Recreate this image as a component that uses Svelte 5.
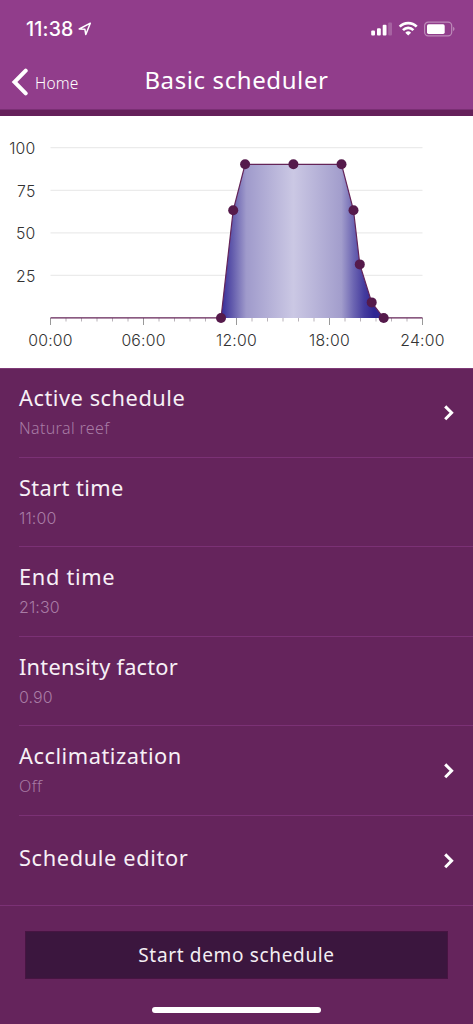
<script>
  const rows = [
    { title: 'Active schedule', value: 'Natural reef', more: true, numeric: false, tracking: 0.53 },
    { title: 'Start time', value: '11:00', more: false, numeric: true, tracking: 0.38 },
    { title: 'End time', value: '21:30', more: false, numeric: true, tracking: 0.68 },
    { title: 'Intensity factor', value: '0.90', more: false, numeric: true, tracking: 0.22 },
    { title: 'Acclimatization', value: 'Off', more: true, numeric: false, tracking: 0.53 },
    { title: 'Schedule editor', value: '', more: true, numeric: false, tracking: 0.62 }
  ];
  const points = [
    [221, 202], [233.2, 94.3], [245.1, 48.3], [293.4, 48.3], [341.5, 48.3],
    [353.5, 94.3], [359.8, 148.4], [371.7, 186.4], [383.7, 202]
  ];
  const outline = points.map((p) => p.join(',')).join(' ');
  const levels = [[100, 31.7], [75, 74.3], [50, 116.8], [25, 159.4]];
  const hours = Array.from({ length: 25 }, (_, i) => i);
  const hourX = (h) => 50.5 + h * 15.5;
  const hourLabels = [0, 6, 12, 18, 24];
</script>

<div class="screen">
  <header>
    <div class="status">
      <span class="clock">11:38</span>
      <svg class="loc" width="14" height="14" viewBox="0 0 14 14"><path d="M1.2 7 12.3 1.2 7.8 12.5 6.9 7.3Z" /></svg>
      <svg class="signals" width="86" height="16" viewBox="0 0 86 16">
        <g fill="#fff">
          <rect x="0.2" y="9.5" width="3.8" height="5" rx="1" />
          <rect x="6" y="7.3" width="3.8" height="7.2" rx="1" />
          <rect x="11.7" y="3.8" width="3.8" height="10.7" rx="1" />
          <rect x="17.2" y="1.5" width="3.8" height="13" rx="1" opacity=".2" />
          <path d="m37.2 14.5 2.9-2.8a4.2 4.2 0 0 0-5.8 0Z" />
          <rect x="56" y="3.3" width="17.7" height="9.6" rx="1.6" />
        </g>
        <g fill="none" stroke="#fff">
          <path d="M32 9.1a7.4 7.4 0 0 1 10.4 0M28.7 5.6a12 12 0 0 1 17 0" stroke-width="2.7" />
          <rect x="53.6" y="1.2" width="27.1" height="13.7" rx="3.6" opacity=".4" stroke-width="1.2" />
        </g>
        <path d="M82.2 5.7q2.6 2.2 0 4.5Z" fill="#fff" opacity=".45" />
      </svg>
    </div>
    <nav>
      <div class="back">
        <svg width="18" height="28" viewBox="0 0 18 28"><path d="M14.7 2.7 3.5 14 14.7 25.3" /></svg>
        <span>Home</span>
      </div>
      <h1>Basic scheduler</h1>
    </nav>
  </header>

  <section class="chart">
    <svg width="473" height="252" viewBox="0 0 473 252">
      <defs>
        <linearGradient id="light" gradientUnits="userSpaceOnUse" x1="221" y1="0" x2="383.7" y2="0">
          <stop offset="0" stop-color="#342a98" />
          <stop offset=".075" stop-color="#665fae" />
          <stop offset=".155" stop-color="#9f9acb" />
          <stop offset=".445" stop-color="#cbc8e4" />
          <stop offset=".74" stop-color="#a29dcc" />
          <stop offset=".815" stop-color="#6c65b2" />
          <stop offset=".88" stop-color="#453c9e" />
          <stop offset=".94" stop-color="#302592" />
          <stop offset="1" stop-color="#302592" />
        </linearGradient>
      </defs>
      {#each levels as [n, y]}
        <line x1="50.5" x2="422.5" y1={y} y2={y} stroke="#ebebeb" stroke-width="1.2" />
        <text x="35.5" y={y + 6.5} text-anchor="end">{n}</text>
      {/each}
      {#each hours as h}
        <line x1={hourX(h)} x2={hourX(h)} y1="202" y2={h % 6 ? 205.5 : 209} stroke={h % 6 ? '#b9b2b9' : '#999'} />
      {/each}
      {#each hourLabels as h}
        <text x={hourX(h)} y="229.8" text-anchor="middle">{String(h).padStart(2, '0')}:00</text>
      {/each}
      <polygon points={outline} fill="url(#light)" />
      <polyline points={outline} fill="none" stroke="#642458" stroke-width="1.2" />
      <path d="M50.5 201.8H221M383.7 201.8H422.5" stroke="#642458" stroke-width="1.3" />
      {#each points as [x, y]}
        <circle cx={x} cy={y} r="5" fill="#551a4b" />
      {/each}
    </svg>
  </section>

  <main>
    {#each rows as row}
      <div class="row">
        <div class="copy">
          <div class="title" style="letter-spacing: {row.tracking}px">{row.title}</div>
          {#if row.value}<div class="value" class:numeric={row.numeric}>{row.value}</div>{/if}
        </div>
        {#if row.more}
          <svg width="14" height="22" viewBox="0 0 14 22"><path d="m3.2 5.4 6.4 6.4-6.4 6.4" /></svg>
        {/if}
      </div>
    {/each}
  </main>

  <footer>
    <button>Start demo schedule</button>
    <div class="indicator"></div>
  </footer>
</div>

<style>
  :global(body) { background: #65245c; }
  .screen {
    width: 473px; height: 1024px; box-sizing: border-box; overflow: hidden;
    display: flex; flex-direction: column;
    background: #65245c; color: #fff;
    font-family: "Noto Sans", "Open Sans", sans-serif;
  }
  header {
    height: 116px; box-sizing: border-box; background: #913d8b;
    border-bottom: 6px solid #65205a; box-shadow: inset 0 -1px #7a2f74;
    display: flex; flex-direction: column;
  }
  .status { height: 57px; display: flex; align-items: center; padding-left: 26px; padding-right: 16px; }
  .clock { font: 500 19.5px/24px Inter, sans-serif; letter-spacing: .2px; }
  .loc { margin-left: 4px; fill: none; stroke: #fff; stroke-width: 1.5; stroke-linejoin: round; }
  .signals { margin-left: auto; }
  nav { height: 50px; display: grid; grid-template-columns: 1fr auto 1fr; align-items: center; }
  .back { display: flex; align-items: center; gap: 6px; padding-left: 11px; font-size: 15.5px; font-weight: 300; }
  .back span { letter-spacing: .2px; padding-top: 2px; }
  .back svg { fill: none; stroke: #fff; stroke-width: 4; stroke-linecap: round; }
  h1 { margin: 0; padding-bottom: 5px; font-size: 24px; line-height: 32px; font-weight: 400; letter-spacing: .6px; }
  .chart { height: 252px; background: #fff; flex: none; }
  .chart svg { display: block; }
  .chart text { font-family: Inter, sans-serif; font-size: 15.8px; font-weight: 300; fill: #333; letter-spacing: .2px; }
  main { box-shadow: inset 0 1px #7e3a76; }
  .row {
    height: 89.5px; box-sizing: border-box; margin-left: 19px; padding-right: 17px;
    border-bottom: 1px solid #7b3175;
    display: flex; align-items: center; justify-content: space-between;
  }
  .row:last-child { margin-left: 0; padding-left: 19px; height: 90px; }
  .copy { padding-top: 2px; }
  .row:last-child .copy { padding: 0 0 5px; }
  .row svg { fill: none; stroke: #fff; stroke-width: 3; }
  .title { font-size: 21.8px; line-height: 31px; font-weight: 400; color: #f7f0f6; }
  .value { font-size: 16px; line-height: 31px; font-weight: 300; color: #a87ca5; letter-spacing: .35px; }
  .value.numeric { font-family: Inter, sans-serif; letter-spacing: .1px; }
  footer { flex: 1; display: flex; flex-direction: column; align-items: center; padding-top: 25.5px; }
  button {
    width: 423px; height: 48px; border: 1px solid #471442; background: #3b163e; color: #f3eef3; padding: 0;
    font: 400 19px/46px "Noto Sans", "Open Sans", sans-serif; letter-spacing: .66px;
  }
  .indicator { width: 169px; height: 6px; margin-top: 28px; border-radius: 3px; background: #fff; }
</style>
